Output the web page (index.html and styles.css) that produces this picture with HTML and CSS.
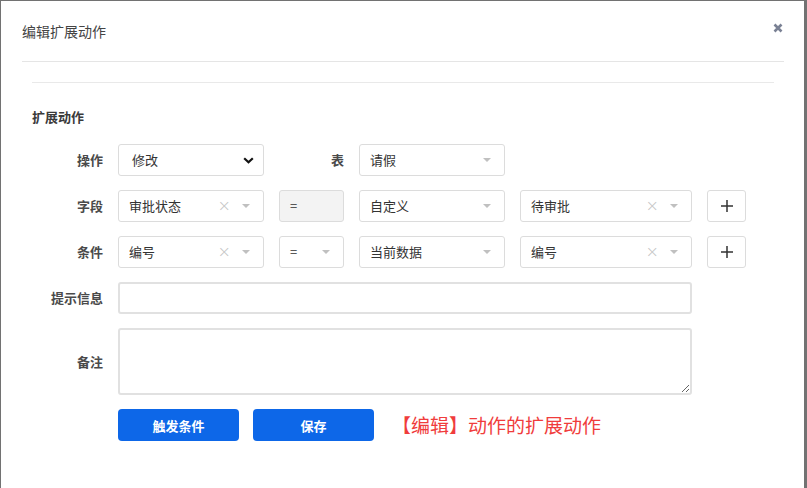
FILE: index.html
```html
<!DOCTYPE html>
<html lang="zh-CN">
<head>
<meta charset="utf-8">
<title>编辑扩展动作</title>
<link rel="stylesheet" href="styles.css">
</head>
<body>
<div class="modal">
  <div class="modal-header">
    <h4 class="modal-title">编辑扩展动作</h4>
    <span class="close" aria-label="关闭">
      <svg width="10" height="10" viewBox="0 0 10 10"><path d="M1.5 1.5 L8.5 8.5 M8.5 1.5 L1.5 8.5" stroke="#7a8194" stroke-width="2.6" stroke-linecap="butt"/></svg>
    </span>
  </div>
  <div class="modal-body">
    <div class="divider"></div>
    <div class="section-title">扩展动作</div>
    <div class="form-grid">
      <label class="lbl">操作</label>
      <div class="ctl native">
        <span class="val val-native">修改</span>
        <svg class="chev" width="11" height="7" viewBox="0 0 11 7"><path d="M1.2 1.2 L5.5 5.3 L9.8 1.2" fill="none" stroke="#111" stroke-width="2.2"/></svg>
      </div>
      <label class="lbl">表</label>
      <div class="ctl">
        <span class="val">请假</span>
        <span class="caret"></span>
      </div>
      <div class="empty"></div>
      <div class="empty"></div>

      <label class="lbl">字段</label>
      <div class="ctl">
        <span class="val">审批状态</span>
        <span class="clear">×</span>
        <span class="caret"></span>
      </div>
      <div class="ctl disabled"><span class="val">=</span></div>
      <div class="ctl">
        <span class="val">自定义</span>
        <span class="caret"></span>
      </div>
      <div class="ctl">
        <span class="val">待审批</span>
        <span class="clear">×</span>
        <span class="caret"></span>
      </div>
      <button class="plus" type="button"><svg width="14" height="14" viewBox="0 0 14 14"><path d="M7 1 V13 M1 7 H13" stroke="#333" stroke-width="1.5"/></svg></button>

      <label class="lbl">条件</label>
      <div class="ctl">
        <span class="val">编号</span>
        <span class="clear">×</span>
        <span class="caret"></span>
      </div>
      <div class="ctl">
        <span class="val">=</span>
        <span class="caret"></span>
      </div>
      <div class="ctl">
        <span class="val">当前数据</span>
        <span class="caret"></span>
      </div>
      <div class="ctl">
        <span class="val">编号</span>
        <span class="clear">×</span>
        <span class="caret"></span>
      </div>
      <button class="plus" type="button"><svg width="14" height="14" viewBox="0 0 14 14"><path d="M7 1 V13 M1 7 H13" stroke="#333" stroke-width="1.5"/></svg></button>

      <label class="lbl">提示信息</label>
      <input class="text-input wide" type="text">
      <div class="empty"></div>

      <label class="lbl">备注</label>
      <textarea class="text-area wide"></textarea>
      <div class="empty"></div>

      <div class="empty"></div>
      <div class="actions">
        <button class="btn" type="button">触发条件</button>
        <button class="btn" type="button">保存</button>
        <span class="note">【编辑】动作的扩展动作</span>
      </div>
    </div>
  </div>
</div>
</body>
</html>
```

FILE: styles.css
```css
html, body {
  margin: 0;
  padding: 0;
}
body {
  background: #727272;
  width: 807px;
  height: 488px;
  overflow: hidden;
  font-family: "Noto Sans CJK SC", "Noto Sans", sans-serif;
  color: #333;
}
.modal {
  margin: 1px 0 0 1px;
  width: 803px;
  height: 487px;
  background: #fff;
}
.modal-header {
  margin: 0 20px 0 21px;
  padding: 20px 0;
  border-bottom: 1px solid #e5e5e5;
  display: flex;
  align-items: center;
  justify-content: space-between;
  height: 20px;
}
.modal-title {
  margin: 0;
  font-size: 14px;
  font-weight: 400;
  line-height: 20px;
  color: #444;
}
.close {
  display: flex;
  margin-right: 1px;
  margin-top: -6px;
}
.modal-body {
  padding: 0 30px 0 31px;
}
.divider {
  margin-top: 20px;
  height: 1px;
  background: #e9e9e9;
}
.section-title {
  margin-top: 24px;
  font-size: 13px;
  font-weight: 700;
  line-height: 20px;
  color: #3a3a3a;
}
.form-grid {
  margin-top: 17px;
  display: grid;
  grid-template-columns: 71px 146px 65px 146px 172px 39px;
  column-gap: 15px;
  row-gap: 14px;
}
.lbl {
  align-self: center;
  text-align: right;
  font-size: 13px;
  font-weight: 700;
  line-height: 18px;
  color: #4a4a4a;
}
.ctl {
  box-sizing: border-box;
  height: 32px;
  border: 1px solid #dcdcdc;
  border-radius: 3px;
  background: #fff;
  display: flex;
  align-items: center;
  padding: 0 10px 0 10px;
  font-size: 13px;
  line-height: 18px;
  color: #333;
}
.ctl .val {
  flex: 1;
  white-space: nowrap;
}
.ctl .val-native {
  padding-left: 3px;
}
.ctl.disabled {
  background: #f3f3f3;
}
.chev {
  margin-right: -1px;
}
.clear {
  color: #c4c4c4;
  font-size: 16px;
  line-height: 16px;
  margin-right: 11px;
  font-family: "DejaVu Sans", sans-serif;
  font-weight: 300;
}
.caret {
  width: 0;
  height: 0;
  border-left: 4px solid transparent;
  border-right: 4px solid transparent;
  border-top: 4px solid #c0c0c0;
  margin-right: 3px;
}
.plus {
  box-sizing: border-box;
  height: 32px;
  border: 1px solid #dcdcdc;
  border-radius: 3px;
  background: #fff;
  display: flex;
  align-items: center;
  justify-content: center;
  padding: 0;
}
.wide {
  grid-column: 2 / 6;
}
.text-input {
  box-sizing: border-box;
  border: 2px solid #e1e1e1;
  border-radius: 3px;
  height: 32px;
  margin: 0;
  width: 100%;
}
.text-area {
  box-sizing: border-box;
  border: 2px solid #e1e1e1;
  border-radius: 3px;
  height: 67px;
  margin: 0;
  width: 100%;
  resize: both;
  display: block;
}
.actions {
  grid-column: 2 / -1;
  display: flex;
  align-items: center;
}
.btn {
  width: 121px;
  height: 32px;
  background: #0d67e8;
  border: none;
  border-radius: 4px;
  color: #fff;
  font-family: "Noto Sans CJK SC", sans-serif;
  font-size: 13px;
  font-weight: 700;
  margin-right: 14px;
  padding: 0;
}
.note {
  margin-left: 4px;
  font-size: 19px;
  line-height: 24px;
  color: #f03c3c;
}
```
